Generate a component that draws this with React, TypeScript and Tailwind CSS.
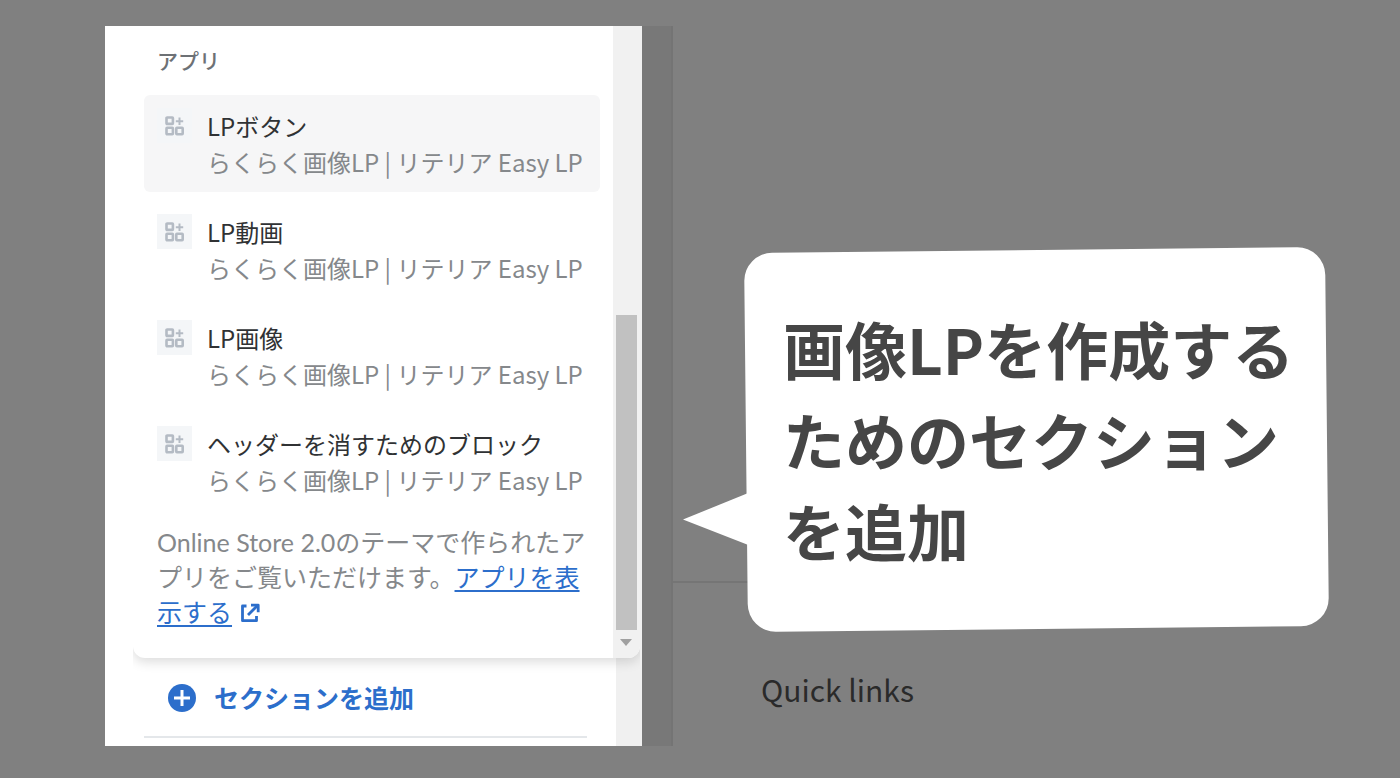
import React from "react";

const appBlocks = ["LPボタン", "LP動画", "LP画像", "ヘッダーを消すためのブロック"];

function BlockIcon() {
  return (
    <span className="flex size-[35px] shrink-0 items-center justify-center bg-[#f4f6f8]">
      <svg viewBox="0 0 20 20" className="size-5" fill="none" stroke="#b4bbc4" strokeWidth="2.6" aria-hidden="true">
        <rect x="1.5" y="1.500" width="6.400" height="6.400" rx="0.6" />
        <rect x="1.5" y="11.800" width="6.400" height="6.400" rx="0.6" />
        <rect x="11.3" y="11.800" width="6.400" height="6.400" rx="0.6" />
        <path d="M14.500 1.500v7.400M10.800 5.200h7.400" strokeWidth="2" />
      </svg>
    </span>
  );
}

function ExternalIcon() {
  return (
    <svg viewBox="0 0 20 20" className="ml-2 inline-block size-5 align-[-1px]" fill="none" stroke="#2c6ecb" strokeWidth="2.8" strokeLinejoin="round" aria-hidden="true">
      <path d="M6.500 3H2.500v14.700H16.500V13" />
      <path d="M8 12L17 3" />
      <path d="M11 2.2h7.2v7" />
    </svg>
  );
}

function AppPicker() {
  return (
    <div className="relative mr-[2px] ml-7 flex rounded-b-xl bg-white shadow-[0_4px_12px_rgba(0,0,0,0.14)] [clip-path:inset(0_0_-24px_0)]">
      <div className="min-w-0 flex-1 pt-4 pr-[13px] pb-7 pl-[11px]">
        <h2 className="pl-[13px] text-[21px] leading-9 font-medium text-[#6d7175]">アプリ</h2>
        <ul className="mt-[17px] flex flex-col gap-[9px]">
          {appBlocks.map((name, i) => (
            <li key={name}>
              <button
                type="button"
                className={`flex w-full gap-[15px] rounded-md pt-[13px] pb-3 pl-[13px] text-left ${i === 0 ? "bg-[#f6f6f7]" : "bg-white"}`}
              >
                <BlockIcon />
                <span className="font-['Noto_Sans_CJK_JP',sans-serif] text-[24px] leading-9 whitespace-nowrap">
                  <span className="block text-[#303234]">{name}</span>
                  <span className="block text-[#85888b]">らくらく画像LP | リテリア Easy LP</span>
                </span>
              </button>
            </li>
          ))}
        </ul>
        <p className="mt-[15px] px-[13px] font-['Lato','Noto_Sans_CJK_JP',sans-serif] text-[25px] leading-[35px] text-[#85888b]">
          Online Store 2.0のテーマで作られたアプリをご覧いただけます。
          <a href="#apps" className="text-[#2c6ecb]">
            <span className="underline decoration-2 underline-offset-3">アプリを表示する</span>
            <ExternalIcon />
          </a>
        </p>
      </div>
      <div className="flex w-[27px] flex-col items-center justify-end rounded-br-xl bg-[#f1f1f1] pr-[1px]">
        <div className="h-[315px] w-[21px] bg-[#c1c1c1]" />
        <svg viewBox="0 0 12 7" className="mt-[9px] mb-3 h-[7px] w-3" fill="#a0a0a0" aria-hidden="true">
          <path d="M0 0h12L6 7z" />
        </svg>
      </div>
    </div>
  );
}

function Sidebar() {
  return (
    <aside className="relative bg-white pb-2">
      <div className="absolute inset-y-0 right-0 w-[26px] bg-[#f0f0f0]" />
      <AppPicker />
      <div className="mr-[55px] ml-[39px] border-b-2 border-[#e4e7ea] pt-[21px] pb-[20px]">
        <button type="button" className="flex items-center gap-[18px] pl-6 text-[25px] leading-[37px] font-bold text-[#2c6ecb]">
          <svg viewBox="0 0 28 28" className="size-7" aria-hidden="true">
            <circle cx="14" cy="14" r="14" fill="#2c6ecb" />
            <path d="M14 6v16M6 14h16" stroke="#fff" strokeWidth="3" />
          </svg>
          セクションを追加
        </button>
      </div>
    </aside>
  );
}

function Bubble() {
  return (
    <div className="relative mr-[73px] ml-[73px] pt-[53px] pb-[53px] pl-[37px]">
      <div className="absolute inset-0 rotate-[-0.6deg] rounded-[28px] bg-white" />
      <svg viewBox="0 0 70 52" className="absolute top-[243px] -left-[63px] h-[52px] w-[70px]" fill="#fff" aria-hidden="true">
        <path d="M0 26.500L64 0.500H70V51.500H64z" />
      </svg>
      <h1 className="relative text-[62px] leading-[91px] font-bold whitespace-nowrap text-[#464646]">
        <span className="block">画像LPを作成する</span>
        <span className="block">ためのセクション</span>
        <span className="block">を追加</span>
      </h1>
    </div>
  );
}

export default function App() {
  return (
    <main className="grid min-h-screen grid-cols-[537px_31px_1fr] items-start bg-[#808080] pt-[26px] pb-8 pl-[105px] font-['Noto_Sans_CJK_JP',sans-serif]">
      <Sidebar />
      <div className="self-stretch border-r-2 border-[#747474] bg-[#787878]" />
      <section className="relative pt-[224px]">
        <div className="absolute top-[555px] left-0 h-[2px] w-[100px] bg-[#757575]" />
        <Bubble />
        <h3 className="mt-[42px] ml-[88px] text-[30px] leading-9 text-[#2a2a2a]">Quick links</h3>
      </section>
    </main>
  );
}
